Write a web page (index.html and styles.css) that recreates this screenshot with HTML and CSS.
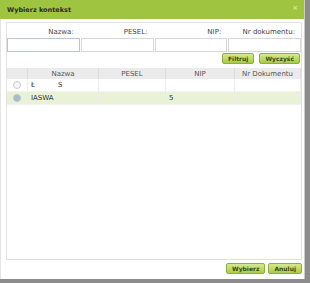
FILE: index.html
```html
<!DOCTYPE html>
<html lang="pl">
<head>
    <meta charset="UTF-8">
    <title>Wybierz kontekst</title>
    <link rel="stylesheet" href="styles.css">
</head>
<body>
    <div class="dialog">
        <div class="titlebar">
            <span class="title">Wybierz kontekst</span>
            <span class="close">×</span>
        </div>
        <div class="dialog-body">
            <div class="panel">
                <div class="filters">
                    <label for="fName">Nazwa:</label>
                    <label for="fPesel">PESEL:</label>
                    <label for="fNip">NIP:</label>
                    <label for="fDoc">Nr dokumentu:</label>
                    <input type="text" id="fName" class="focused">
                    <input type="text" id="fPesel">
                    <input type="text" id="fNip">
                    <input type="text" id="fDoc">
                </div>
                <div class="filter-actions">
                    <button class="btn">Filtruj</button>
                    <button class="btn">Wyczyść</button>
                </div>
                <table class="grid">
                    <thead>
                        <tr>
                            <th class="col-radio"></th>
                            <th class="col-name">Nazwa</th>
                            <th class="col-pesel">PESEL</th>
                            <th class="col-nip">NIP</th>
                            <th>Nr Dokumentu</th>
                        </tr>
                    </thead>
                    <tbody>
                        <tr>
                            <td class="col-radio"><span class="radio"></span></td>
                            <td class="left">Ł<span class="surname">S</span></td>
                            <td></td>
                            <td></td>
                            <td></td>
                        </tr>
                        <tr class="selected">
                            <td class="col-radio"><span class="radio checked"></span></td>
                            <td class="left">IASWA</td>
                            <td></td>
                            <td class="left">5</td>
                            <td></td>
                        </tr>
                    </tbody>
                </table>
            </div>
            <div class="actions">
                <button class="btn">Wybierz</button>
                <button class="btn">Anuluj</button>
            </div>
        </div>
    </div>
</body>
</html>
```

FILE: styles.css
```css
body {
    margin: 0;
    background-color: #8c8c8c;
    font-family: "DejaVu Sans", Verdana, sans-serif;
    font-size: 7px;
    color: #333;
}
.dialog {
    width: 304px;
    height: 279px;
    background-color: white;
    display: flex;
    flex-direction: column;
    border-right: 1px solid #c8c8c8;
}
.titlebar {
    height: 19px;
    background-color: #9fc540;
    display: flex;
    align-items: center;
    justify-content: space-between;
    padding: 0 6px 0 7px;
}
.title {
    font-weight: bold;
    font-size: 6.5px;
    color: #2a2a2a;
}
.close {
    color: #e6f0cc;
    font-size: 7px;
    margin-top: -4px;
}
.dialog-body {
    flex: 1;
    display: flex;
    flex-direction: column;
    padding: 3px 2px 5px 5px;
    border-left: 1px solid #e4e4e4;
}
.panel {
    flex: 1;
    border: 1px solid #e2e2e2;
    display: flex;
    flex-direction: column;
}
.filters {
    display: grid;
    grid-template-columns: repeat(4, 1fr);
    column-gap: 1px;
    padding-top: 3px;
}
.filters label {
    text-align: right;
    padding-right: 6px;
    height: 12px;
    line-height: 12px;
    color: #444;
}
.filters input {
    height: 14px;
    margin: 0;
    border: 1px solid #d8d8d8;
    box-sizing: border-box;
    width: 100%;
    padding: 0 2px;
}
.filters input.focused {
    border-color: #b4c6d8;
}
.filter-actions {
    display: flex;
    justify-content: flex-end;
    gap: 5px;
    padding: 1px 1px 4px 0;
}
.btn {
    height: 11px;
    padding: 0 5px;
    border: 1px solid #8db03a;
    border-radius: 2px;
    background: linear-gradient(#d6ea8c, #a8cc44);
    font-family: "DejaVu Sans", Verdana, sans-serif;
    font-size: 6px;
    font-weight: bold;
    color: #3c4a1a;
    line-height: 9px;
    cursor: pointer;
}
.grid {
    width: 100%;
    border-collapse: collapse;
    table-layout: fixed;
}
.grid th {
    background-color: #ebebeb;
    font-weight: normal;
    height: 11px;
    padding: 0;
    border-right: 1px solid #dcdcdc;
    color: #555;
}
.grid td {
    height: 12px;
    padding: 0;
    border-right: 1px solid #ececec;
    border-bottom: 1px solid #f2f2f2;
}
.grid td.left {
    padding-left: 3px;
}
.surname {
    margin-left: 23px;
}
.col-radio {
    width: 20px;
    text-align: center;
}
.col-name {
    width: 70px;
}
.col-pesel {
    width: 66px;
}
.col-nip {
    width: 68px;
}
.grid tr.selected td {
    background-color: #e9f2d6;
}
.radio {
    display: inline-block;
    width: 6px;
    height: 6px;
    border-radius: 50%;
    border: 1px solid #c9ced4;
    background-color: #f4f6f8;
    vertical-align: middle;
}
.radio.checked {
    background-color: #a7bccd;
    border-color: #b7c6d2;
}
.actions {
    display: flex;
    justify-content: flex-end;
    gap: 3px;
    padding-top: 3px;
}
```
